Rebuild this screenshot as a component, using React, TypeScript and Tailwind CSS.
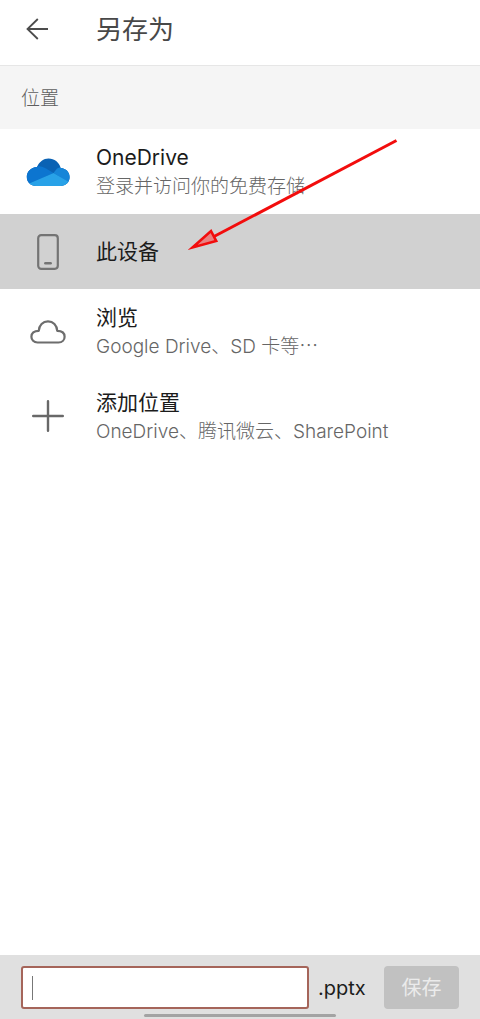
import type { ReactNode } from 'react';

function BackIcon() {
  return (
    <svg width="22" height="22" viewBox="0 0 22 22" fill="none" stroke="#4c4c4c" strokeWidth="1.8" aria-hidden="true">
      <path d="M11.8 1L1.5 11l10.3 10M1.5 11H22" />
    </svg>
  );
}

function OneDriveIcon() {
  return (
    <svg width="44" height="28" viewBox="0 0 44 28" aria-hidden="true">
      <defs>
        <clipPath id="drive-cloud">
          <path d="M10 28C4.5 28 0.8 24 0.8 18.8C0.8 13.5 4.8 9.4 11 8.9C13.5 3.8 17.5 0.6 22.5 0.6C28.5 0.6 33 4.3 34.7 10C40 10.4 43.6 14.2 43.6 19C43.6 24.2 39.7 28 34.5 28Z" />
        </clipPath>
      </defs>
      <g clipPath="url(#drive-cloud)">
        <path d="M0 0H44V28H0Z" fill="#0a62b4" />
        <path d="M0 8H11C15 8 17 9 20 10.6L27.5 15L0 27Z" fill="#0c75d0" />
        <path d="M27.5 15L31 10.5C33 9.5 36 9 44 9V25Z" fill="#1685d8" />
        <path d="M2.5 25.8L27.5 15L43 24L40 28H5Z" fill="#28a2e8" />
      </g>
    </svg>
  );
}

function PhoneIcon() {
  return (
    <svg width="22" height="36" viewBox="0 0 22 36" fill="none" stroke="#747474" strokeWidth="2.2" strokeLinecap="round" aria-hidden="true">
      <rect x="1.2" y="1.2" width="19.6" height="33.6" rx="3" />
      <path d="M8.3 29.3h5.4" strokeWidth="2.4" />
    </svg>
  );
}

function CloudIcon() {
  return (
    <svg width="36" height="24" viewBox="0 0 36 24" fill="none" stroke="#6d6d6d" strokeWidth="2.2" strokeLinejoin="round" aria-hidden="true">
      <path d="M7.5 22.5C3.8 22.5 1.4 20 1.4 16.7C1.4 13.2 4 10.8 8.8 10.8C9.1 5.2 12.8 1.4 18 1.4C23.2 1.4 26.9 5.2 27.2 10.8C32 10.8 34.6 13.2 34.6 16.7C34.6 20 32.2 22.5 28.5 22.5Z" />
    </svg>
  );
}

function PlusIcon() {
  return (
    <svg width="32" height="34" viewBox="0 0 32 34" fill="none" stroke="#686868" strokeWidth="2.4" strokeLinecap="round" aria-hidden="true">
      <path d="M16 1.2v29.6M1.2 16h29.6" />
    </svg>
  );
}

function PointerArrow() {
  return (
    <svg className="pointer-events-none absolute top-2.5 left-[188px]" width="210" height="112" viewBox="0 0 210 112" fill="none" stroke="#f20d0d" aria-hidden="true">
      <path d="M208.5 1.5L26 97.5" strokeWidth="3" />
      <path d="M4.5 108.5L23 92L28.2 102Z" fill="#e88383" strokeWidth="2.6" strokeMiterlimit="10" />
    </svg>
  );
}

type PlaceProps = { icon: ReactNode; title: string; detail?: string; selected?: boolean };

function Place({ icon, title, detail, selected = false }: PlaceProps) {
  return (
    <li>
      <button
        type="button"
        className={`flex w-full items-center text-left ${selected ? 'h-[75px] bg-[#d1d1d1]' : 'h-[85px] bg-white pt-px'}`}
      >
        <span className="flex w-24 shrink-0 justify-center">{icon}</span>
        <span className="flex min-w-0 flex-col">
          <span className="text-[21px] leading-[30px] text-[#1b1b1b]">{title}</span>
          {detail && <span className="text-[19px] leading-7 font-light whitespace-nowrap text-[#666666]">{detail}</span>}
        </span>
      </button>
    </li>
  );
}

export default function App() {
  return (
    <div className="flex min-h-screen flex-col bg-white font-['Inter','Noto_Sans_CJK_SC',sans-serif]">
      <header className="flex h-[66px] items-center border-b border-[#e6e6e6] pb-1.5">
        <button type="button" aria-label="返回" className="flex w-24 justify-center pr-[22px] pb-0.5">
          <BackIcon />
        </button>
        <h1 className="text-[26px] leading-9 text-[#484848]">另存为</h1>
      </header>
      <main className="flex-1">
        <h2 className="flex h-[63px] items-center bg-[#f5f5f5] px-[21px] pt-[3px] text-[19px] font-light text-[#5e5e5e]">位置</h2>
        <div className="relative">
          <ul>
            <Place icon={<OneDriveIcon />} title="OneDrive" detail="登录并访问你的免费存储" />
            <Place icon={<PhoneIcon />} title="此设备" selected />
            <Place icon={<CloudIcon />} title="浏览" detail="Google Drive、SD 卡等⋯" />
            <Place icon={<PlusIcon />} title="添加位置" detail="OneDrive、腾讯微云、SharePoint" />
          </ul>
          <PointerArrow />
        </div>
      </main>
      <footer className="relative flex h-16 items-center bg-[#e0e0e0] px-[21px]">
        <div className="relative min-w-0 flex-1">
          <input
            type="text"
            aria-label="文件名"
            className="block h-[43px] w-full rounded-[3px] border-2 border-[#a5655a] bg-white px-2.5 text-[20px] outline-none"
          />
          <span className="absolute top-2.5 left-[11px] h-6 w-px bg-[#777777]" />
        </div>
        <span className="w-[75px] pt-0.5 pl-[9px] text-[20px] text-[#1c1c1c]">.pptx</span>
        <button type="button" className="h-[43px] w-[75px] rounded bg-[#c1c1c1] pt-0.5 text-[20px] text-[#ebebeb]">
          保存
        </button>
        <span className="absolute bottom-0.5 left-1/2 h-[3px] w-2/5 -translate-x-1/2 rounded-full bg-[#a3a3a3]" />
      </footer>
    </div>
  );
}
